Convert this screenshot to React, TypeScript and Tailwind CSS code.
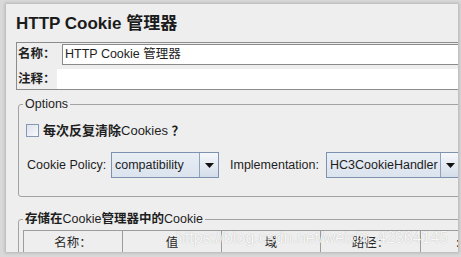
import React from "react";

const FONT = "font-['Liberation_Sans','Noto_Sans_CJK_SC',sans-serif]";

function Arrow() {
  return (
    <svg width="9" height="5" viewBox="0 0 9 5">
      <path d="M0 0 H9 L4.5 5 Z" fill="#111" />
    </svg>
  );
}

function Combo({ text, width, bodyWidth }: { text: string; width: string; bodyWidth: string }) {
  return (
    <div className={`flex h-[26px] shrink-0 border border-[#7d91b0] ${width}`}>
      <div
        className={`flex items-center pl-[3px] bg-gradient-to-b from-[#e9eef5] to-[#dbe3ee] text-[12.5px] text-[#1e1e1e] ${bodyWidth}`}
      >
        {text}
      </div>
      <div className="flex w-[19px] shrink-0 items-center justify-center border-l border-[#8fa2bd] bg-gradient-to-b from-[#f6f8fb] to-[#d3dde9]">
        <Arrow />
      </div>
    </div>
  );
}

export default function App() {
  return (
    <div className={`relative h-[257px] w-[461px] overflow-hidden bg-[#d9d9d9] pt-[4px] pl-[6px] pr-[3px] ${FONT}`}>
      <div className="flex h-[248px] flex-col overflow-hidden bg-[#eeeeee] pt-[10px] pl-[10px] shadow-[0_0_3px_1px_rgba(0,0,0,0.18)]">
        {/* Title */}
        <div className="h-[20px] leading-[20px] text-[17px] font-bold text-[#1b1b1b] whitespace-nowrap">
          HTTP Cookie 管理器
        </div>

        {/* Name / comment box */}
        <div className="mt-[8px] mr-[-4px] flex h-[48px] flex-col gap-[4px] border border-r-0 border-[#8c8c8c] pt-[1px]">
          <div className="flex h-[21px]">
            <div className="flex w-[45px] shrink-0 items-center pl-[1px] text-[12.5px] font-bold text-[#1e1e1e]">
              名称：
            </div>
            <div className="flex flex-1 items-center border border-r-0 border-[#8a8a8a] bg-white pl-[2px] text-[12.5px] text-[#1e1e1e] whitespace-nowrap">
              HTTP Cookie 管理器
            </div>
          </div>
          <div className="flex h-[20px]">
            <div className="flex w-[40px] shrink-0 items-center pl-[1px] text-[12.5px] font-bold text-[#1e1e1e]">
              注释：
            </div>
            <div className="flex-1 bg-white" />
          </div>
        </div>

        {/* Options group */}
        <fieldset className="mt-[7px] ml-[2px] mr-[-20px] rounded-[3px] border border-[#a3a3a3]">
          <legend className="ml-[4px] px-[2px] text-[12.5px] leading-[14px] text-[#1e1e1e]">Options</legend>
          <div className="flex flex-col pt-[13px] pb-[18px]">
            <div className="flex h-[13px] items-center pl-[7px]">
              <div className="h-[13px] w-[13px] shrink-0 border border-[#8798b2] bg-gradient-to-br from-[#dde4ee] to-[#f7f9fb]" />
              <div className="ml-[4px] whitespace-nowrap text-[13px] leading-[13px] text-[#1e1e1e]">
                <span className="font-bold">每次反复清除</span>
                <span>Cookies </span>
                <span className="font-bold">？</span>
              </div>
            </div>
            <div className="mt-[15px] flex items-center pl-[8px]">
              <div className="w-[84px] shrink-0 text-[12.5px] text-[#1e1e1e]">Cookie Policy:</div>
              <Combo text="compatibility" width="w-[108px]" bodyWidth="w-[88px]" />
              <div className="ml-[11px] w-[96px] shrink-0 text-[12.5px] text-[#1e1e1e]">Implementation:</div>
              <Combo text="HC3CookieHandler" width="w-[160px]" bodyWidth="w-[113px]" />
            </div>
          </div>
        </fieldset>

        {/* Cookie table group */}
        <fieldset className="mt-[15px] ml-[2px] mr-[-20px] rounded-[3px] border border-[#a3a3a3]">
          <legend className="ml-[4px] px-[2px] text-[12.5px] leading-[14px] text-[#1e1e1e] whitespace-nowrap">
            <span className="font-bold">存储在</span>
            <span>Cookie</span>
            <span className="font-bold">管理器中的</span>
            <span>Cookie</span>
          </legend>
          <div className="pt-[4px] pl-[4px]">
            <div className="flex h-[26px] border-t border-l border-[#9c9c9c] text-[12.5px] text-[#2a2a2a]">
              <div className="flex w-[99px] shrink-0 items-center justify-center border-r border-[#9c9c9c]">名称：</div>
              <div className="flex w-[99px] shrink-0 items-center justify-center border-r border-[#9c9c9c]">值</div>
              <div className="flex w-[99px] shrink-0 items-center justify-center border-r border-[#9c9c9c]">域</div>
              <div className="flex w-[100px] shrink-0 items-center justify-center border-r border-[#9c9c9c]">路径：</div>
              <div className="flex w-[99px] shrink-0 items-center pl-[35px] font-bold">:</div>
            </div>
          </div>
        </fieldset>
      </div>

      {/* watermark overlay */}
      <div className="absolute left-[176px] top-[230px] whitespace-nowrap text-[16px] leading-[16px] text-white/90 [text-shadow:0_0_1px_rgba(0,0,0,0.3)] font-['Liberation_Sans',sans-serif]">
        https://blog.csdn.net/weixin_42864145
      </div>
    </div>
  );
}
